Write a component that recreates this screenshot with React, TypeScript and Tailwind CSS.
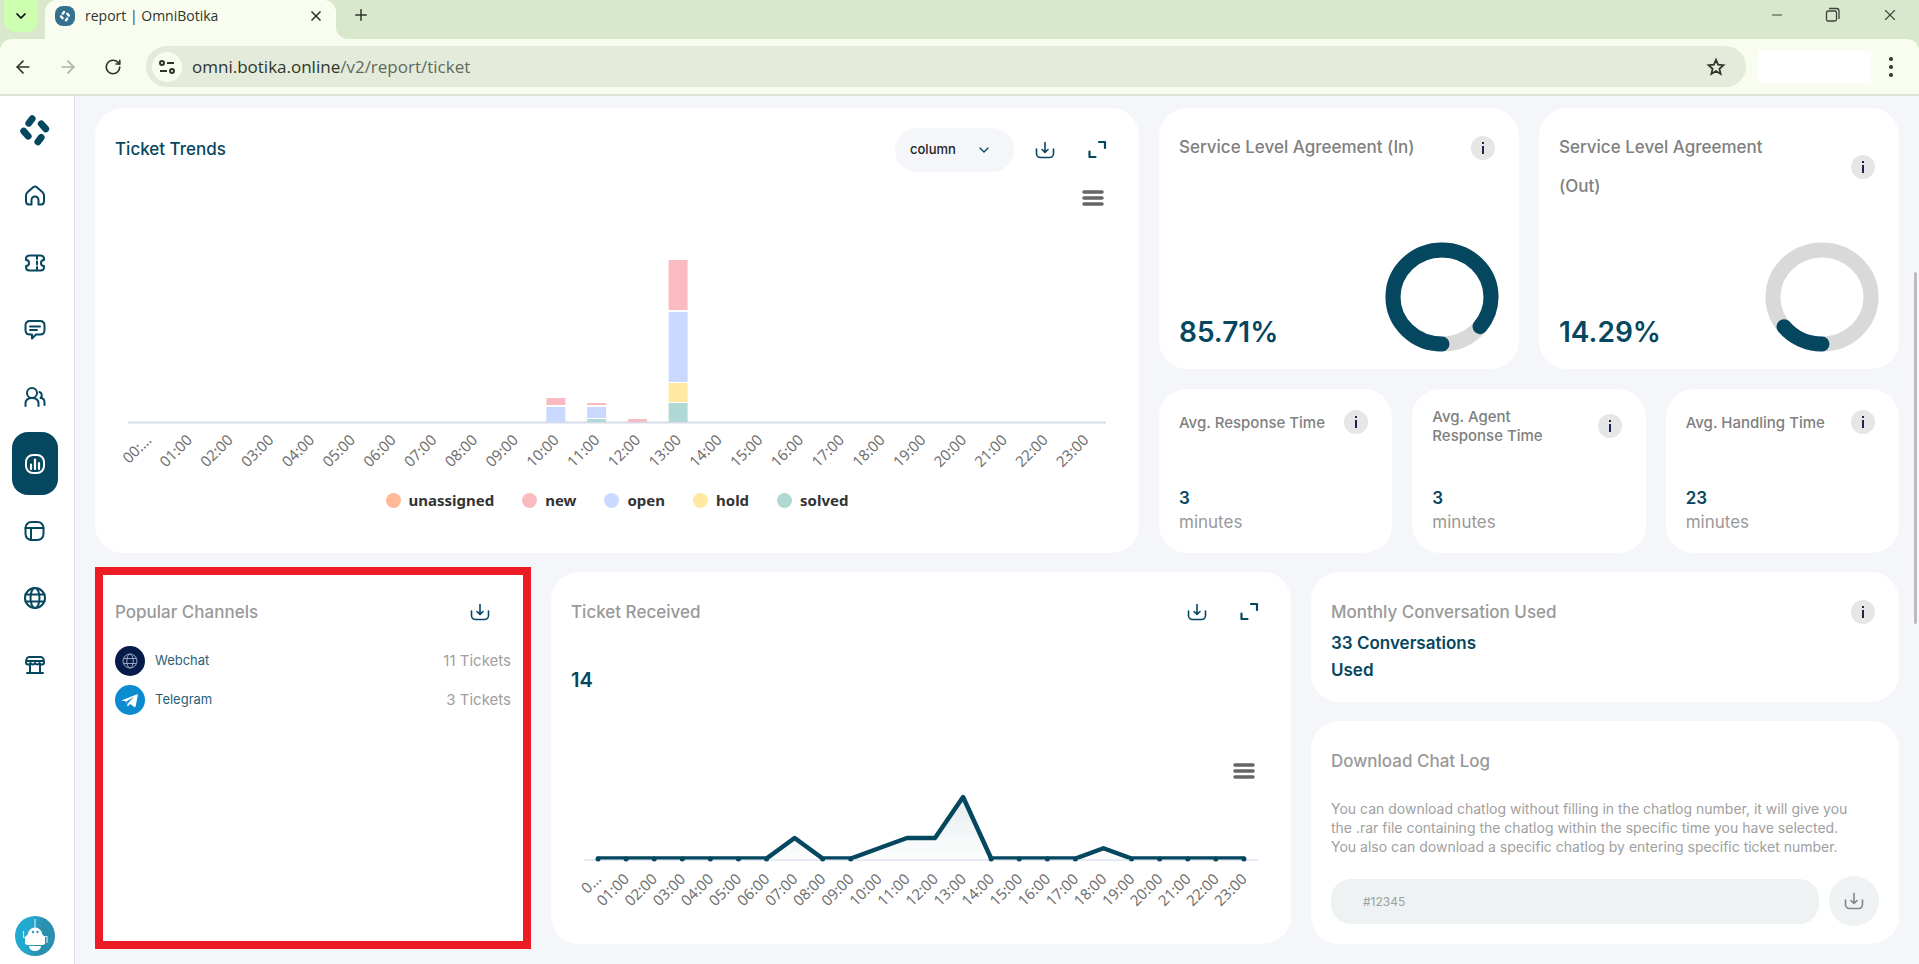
import type { ReactNode } from "react";
import { ArrowLeft, ArrowRight, ChevronDown, Minus, Plus, RotateCw, X } from "lucide-react";

const hours = Array.from({ length: 24 }, (_, i) => `${String(i).padStart(2, "0")}:00`);

const legend = [
    { label: "unassigned", dot: "bg-[#ffb996]" },
    { label: "new", dot: "bg-[#f9bbc0]" },
    { label: "open", dot: "bg-[#cad9ff]" },
    { label: "hold", dot: "bg-[#ffe8a0]" },
    { label: "solved", dot: "bg-[#b0d8d4]" },
];

// Stacked segments, top to bottom, in chart coordinates
const bars = [
    { hour: 10, y: 213, h: 7, color: "#f9bbc0" },
    { hour: 10, y: 222, h: 15, color: "#cad9ff" },
    { hour: 11, y: 218, h: 2, color: "#f9bbc0" },
    { hour: 11, y: 222, h: 11, color: "#cad9ff" },
    { hour: 11, y: 234, h: 3, color: "#b0d8d4" },
    { hour: 12, y: 234, h: 3, color: "#f4bcc4" },
    { hour: 13, y: 75, h: 50, color: "#f9bbc0" },
    { hour: 13, y: 127, h: 70, color: "#cad9ff" },
    { hour: 13, y: 198, h: 19, color: "#ffe8a0" },
    { hour: 13, y: 218, h: 19, color: "#b0d8d4" },
];

const received = [0, 0, 0, 0, 0, 0, 0, 2, 0, 0, 1, 2, 2, 6, 0, 0, 0, 0, 1, 0, 0, 0, 0, 0];

const averages = [
    { title: "Avg. Response Time", value: 3 },
    { title: "Avg. Agent Response Time", value: 3 },
    { title: "Avg. Handling Time", value: 23 },
];

function Card({ className = "", children }: { className?: string; children: ReactNode }) {
    return <section className={`rounded-[28px] bg-white px-5 ${className}`}>{children}</section>;
}

function InfoButton({ label }: { label: string }) {
    return (
        <button aria-label={label} className="flex size-6 shrink-0 items-center justify-center rounded-full bg-[#e6e6e6]">
            <svg viewBox="0 0 24 24" className="size-6" fill="#1c2450">
                <rect x="11" y="6" width="2" height="2" />
                <rect x="11" y="10" width="2" height="8" />
            </svg>
        </button>
    );
}

function DownloadIcon() {
    return (
        <svg viewBox="0 0 20 20" className="size-5" fill="none" stroke="currentColor" strokeWidth="1.6" strokeLinecap="round" strokeLinejoin="round">
            <path d="M10 2.500v9.500M7 9.500l3 3 3-3" />
            <path d="M1.500 9v4.500a4 4 0 0 0 4 4h9a4 4 0 0 0 4-4V9" />
        </svg>
    );
}

function ExpandIcon() {
    return (
        <svg viewBox="0 0 20 20" className="size-5" fill="none" stroke="currentColor" strokeWidth="2.200" strokeLinecap="round" strokeLinejoin="round">
            <path d="M12 2h6v6M2.500 11.500V17h6" />
        </svg>
    );
}

function ChartMenu({ x, y }: { x: number; y: number }) {
    return (
        <path
            d={`M${x} ${y}h18M${x} ${y + 6}h18M${x} ${y + 12}h18`}
            stroke="#666666"
            strokeWidth="3.500"
            strokeLinecap="round"
        />
    );
}

function HourLabels({ start, step, y, first }: { start: number; step: number; y: number; first: string }) {
    return (
        <g fill="#707070" fontSize="15" textAnchor="end" className="font-['Noto_Sans',sans-serif]">
            {hours.map((hour, i) => {
                const x = start + step * (i + 0.5) + 4;
                return (
                    <text key={hour} x={x} y={y} transform={`rotate(-45 ${x} ${y})`}>
                        {i === 0 ? first : hour}
                    </text>
                );
            })}
        </g>
    );
}

function TrendsChart() {
    return (
        <svg viewBox="0 0 1004 300" className="w-full" fill="none" role="img" aria-label="Ticket trends by hour">
            <path d="M13 237.500h978" stroke="#d5dbe8" strokeWidth="2" />
            {bars.map((bar, i) => (
                <rect key={i} x={13 + 40.75 * (bar.hour + 0.5) - 9.5} y={bar.y} width="19" height={bar.h} fill={bar.color} />
            ))}
            <ChartMenu x={969} y={7} />
            <HourLabels start={13} step={40.75} y={256} first="00:…" />
        </svg>
    );
}

function ReceivedChart() {
    const points = received.map((count, i) => ({ x: 13 + 28.08 * (i + 0.5), y: 103.5 - count * 10.25, count }));
    const line = points.map((p) => `${p.x},${p.y}`).join(" ");
    return (
        <svg viewBox="0 0 700 165" className="w-full" fill="none" role="img" aria-label="Tickets received by hour">
            <defs>
                <linearGradient id="area" x1="0" y1="0" x2="0" y2="1">
                    <stop offset="0" stopColor="#064760" stopOpacity="0.1" />
                    <stop offset="1" stopColor="#064760" stopOpacity="0.01" />
                </linearGradient>
                <clipPath id="plot">
                    <rect width="700" height="104.500" />
                </clipPath>
            </defs>
            <polygon points={`27,103.5 ${line} 673,103.5`} fill="url(#area)" />
            <path d="M13 105h674" stroke="#ccd6eb" />
            <polyline points={line} stroke="#064760" strokeWidth="4.500" strokeLinejoin="round" strokeLinecap="round" clipPath="url(#plot)" />
            {points.map((p) => p.count === 0 && <circle key={p.x} cx={p.x} cy={104} r="2.500" fill="#064760" />)}
            <ChartMenu x={664} y={10} />
            <HourLabels start={13} step={28.08} y={125} first="0…" />
        </svg>
    );
}

function Donut({ percent }: { percent: number }) {
    const ring = "M57 102A49 47 0 0 1 57 8A49 47 0 0 1 57 102";
    return (
        <svg viewBox="0 0 114 110" className="h-[110px] w-[114px] shrink-0" fill="none" strokeWidth="15">
            <path d={ring} stroke="#d9d9d9" />
            <path d={ring} stroke="#064760" strokeLinecap="round" pathLength="100" strokeDasharray={`${percent} 200`} />
        </svg>
    );
}

function SlaCard({ title, percent }: { title: string; percent: number }) {
    return (
        <Card className="flex flex-col justify-between pt-5 pb-[17px]">
            <div className="flex items-center justify-between gap-[52px] pr-1">
                <h2 className="text-[17px] leading-[39px] font-medium text-[#808080]">{title}</h2>
                <InfoButton label={`About ${title}`} />
            </div>
            <div className="flex items-end justify-between">
                <p className="pb-[2px] text-[28px] leading-9 font-semibold text-[#064760]">{percent}%</p>
                <Donut percent={percent} />
            </div>
        </Card>
    );
}

function LogoMark({ className }: { className: string }) {
    return (
        <svg viewBox="0 0 30 30" className={className} stroke="currentColor" strokeWidth="6" strokeLinecap="round">
            <path d="M9.500 9l3-4M20.500 9.500l4 4.500M5 16l4 4.500M17.500 25.500l3-4" />
        </svg>
    );
}

function NavIcon({ children }: { children: ReactNode }) {
    return (
        <svg viewBox="0 0 24 24" className="size-6" fill="none" stroke="currentColor" strokeWidth="2" strokeLinecap="round" strokeLinejoin="round">
            {children}
        </svg>
    );
}

const globe = (
    <>
        <circle cx="12" cy="12" r="10" />
        <ellipse cx="12" cy="12" rx="4.500" ry="10" />
        <path d="M2.500 8.500h19M2.500 15.500h19" />
    </>
);

const nav = [
    {
        label: "Home",
        icon: <path d="M3 11.500c0-1.500.6-2.500 1.700-3.500l5.200-4.600c1.300-1.100 2.900-1.100 4.200 0L19.300 8c1.100 1 1.700 2 1.700 3.500V17c0 2.500-1 3.500-3 3.500h-2.500V16a3.500 3.500 0 0 0-7 0v4.500H6c-2 0-3-1-3-3.500z" />,
    },
    {
        label: "Tickets",
        icon: (
            <>
                <path d="M3 8c0-2.500 1-3.500 3.500-3.500h11C20 4.500 21 5.500 21 8v1a3 3 0 0 0 0 6v1c0 2.500-1 3.500-3.500 3.500h-11C4 19.500 3 18.500 3 16v-1a3 3 0 0 0 0-6z" />
                <path d="M14 5v3M14 10.500v3M14 16v3" />
            </>
        ),
    },
    {
        label: "Chat",
        icon: (
            <>
                <path d="M7 3h10c2.700 0 4.500 1.800 4.500 4.500V12c0 2.700-1.800 4.500-4.500 4.500h-4L9 20.500v-4H7c-2.700 0-4.500-1.800-4.500-4.500V7.500C2.500 4.800 4.300 3 7 3z" />
                <path d="M7 8.500h10M7 12h7" />
            </>
        ),
    },
    {
        label: "Contacts",
        icon: (
            <>
                <circle cx="9" cy="8" r="5" />
                <path d="M2.500 21v-2.500c0-3.500 2.500-5.500 6.500-5.500s6.500 2 6.500 5.500V21M16.500 7a3.500 3.500 0 0 1 1 6c2.500 0 4 2 4 4.500V20" />
            </>
        ),
    },
    {
        label: "Reports",
        icon: (
            <>
                <rect x="3" y="3" width="18" height="18" rx="7" />
                <path d="M8 12.500v4.500M12 7.500V17M16 11v6" strokeWidth="2.200" />
            </>
        ),
        active: true,
    },
    {
        label: "Layouts",
        icon: (
            <>
                <rect x="2.500" y="3" width="18" height="18" rx="6" />
                <path d="M2.500 9h18M8 9v12" />
            </>
        ),
    },
    { label: "Languages", icon: globe },
    {
        label: "Store",
        icon: (
            <>
                <path d="M6 4h12c1.500 0 2 .6 2.500 2L21 9.500c0 2.700-3.500 2.700-4.500.5-.9 2-3.600 2-4.500 0-.9 2-3.600 2-4.500 0-1 2.200-4.500 2.200-4.500-.5L3.500 6C4 4.600 4.500 4 6 4z" />
                <path d="M3.500 8h17M7 12v8M17 12v8M4 20h16" />
            </>
        ),
    },
];

function Browser() {
    return (
        <header className="shrink-0 border-b-2 border-[#dfe5d8] bg-[#d9e7cd] font-['Open_Sans',sans-serif] text-[#2f352c]">
            <div className="flex h-[39px] items-end">
                <button aria-label="Search tabs" className="mx-1 flex h-8 w-[34px] items-center justify-center self-start rounded-b-xl bg-[#ccffb0] text-black">
                    <ChevronDown className="size-4" strokeWidth={2.5} />
                </button>
                <div className="ml-[3px] flex h-[39px] w-[291px] items-center rounded-t-xl bg-[#f8fdf0] pr-3 pb-2 pl-[10px]">
                    <span className="flex size-5 items-center justify-center rounded-lg bg-[#34718f] text-white">
                        <LogoMark className="size-3" />
                    </span>
                    <span className="ml-[10px] flex-1 text-sm">report | OmniBotika</span>
                    <button aria-label="Close tab"><X className="size-4" strokeWidth={2.5} /></button>
                </div>
                <span className="size-3 bg-[#f8fdf0]">
                    <span className="block size-3 rounded-bl-xl bg-[#d9e7cd]" />
                </span>
                <button aria-label="New tab" className="ml-1 self-start pt-[6px]">
                    <Plus className="size-[18px]" />
                </button>
                <div className="ml-auto flex gap-10 self-start pt-[6px] pr-5 text-[#3c4438]">
                    <button aria-label="Minimize"><Minus className="size-4" strokeWidth={1.5} /></button>
                    <button aria-label="Restore">
                        <svg viewBox="0 0 16 16" className="size-4" fill="none" stroke="currentColor" strokeWidth="1.300">
                            <rect x="1.500" y="4" width="10" height="10" rx="1.500" />
                            <path d="M4 1.500h7.500a2.500 2.500 0 0 1 2.500 2.500V12" />
                        </svg>
                    </button>
                    <button aria-label="Close"><X className="size-[18px]" strokeWidth={1.5} /></button>
                </div>
            </div>
            <div className="flex h-[55px] items-center rounded-t-xl bg-[#f8fdf0] pl-[13px]">
                <button aria-label="Back"><ArrowLeft className="size-5" /></button>
                <button aria-label="Forward" className="ml-[25px] text-[#aab2a4]"><ArrowRight className="size-5" /></button>
                <button aria-label="Reload" className="ml-[26px]"><RotateCw className="size-[18px]" strokeWidth={2.2} /></button>
                <div className="ml-6 flex h-[41px] flex-1 items-center rounded-full bg-[#e4ebdb] pl-[6px] pr-5">
                    <button aria-label="Site information" className="flex size-[30px] items-center justify-center rounded-full bg-[#f8fdf0]">
                        <svg viewBox="0 0 18 18" className="size-[18px]" fill="none" stroke="currentColor" strokeWidth="2">
                            <circle cx="4" cy="5" r="2" />
                            <path d="M9 5h7M2 13h7" />
                            <circle cx="14" cy="13" r="2" />
                        </svg>
                    </button>
                    <div role="textbox" aria-label="Address" tabIndex={0} className="ml-[10px] flex-1 text-[17px] leading-6">
                        omni.botika.online<span className="text-[#62695c]">/v2/report/ticket</span>
                    </div>
                    <button aria-label="Bookmark">
                        <svg viewBox="0 0 20 20" className="size-5" fill="none" stroke="currentColor" strokeWidth="1.800">
                            <path d="M10 2.800l2.100 4.900 5.300.5-4 3.500 1.200 5.200-4.600-2.800-4.600 2.800 1.200-5.200-4-3.500 5.300-.5z" />
                        </svg>
                    </button>
                </div>
                <span className="ml-3 h-8 w-[113px] bg-white" />
                <button aria-label="Menu" className="mr-[18px] ml-[10px]">
                    <svg viewBox="0 0 20 24" className="h-6 w-5" fill="currentColor">
                        <circle cx="10" cy="4" r="2" />
                        <circle cx="10" cy="12" r="2" />
                        <circle cx="10" cy="20" r="2" />
                    </svg>
                </button>
            </div>
        </header>
    );
}

function Sidebar() {
    return (
        <aside className="flex w-[75px] shrink-0 flex-col items-center border-r border-[#dfe2e8] bg-white pr-1 pb-2 text-[#064760]">
            <a href="#" aria-label="OmniBotika" className="flex h-[68px] items-center">
                <LogoMark className="size-[34px]" />
            </a>
            <nav className="flex flex-col gap-1">
                {nav.map((item) => (
                    <a
                        key={item.label}
                        href="#"
                        aria-label={item.label}
                        className={`flex h-[63px] w-[46px] items-center justify-center rounded-2xl ${item.active ? "bg-[#064760] text-white" : ""}`}
                    >
                        <NavIcon>{item.icon}</NavIcon>
                    </a>
                ))}
            </nav>
            <button aria-label="Account" className="mt-auto">
                <svg viewBox="0 0 40 40" className="size-10">
                    <defs>
                        <linearGradient id="bot" x1="0" y1="0" x2="1" y2="0.2">
                            <stop offset="0.4" stopColor="#22a9cf" />
                            <stop offset="0.7" stopColor="#2b90b0" />
                        </linearGradient>
                    </defs>
                    <circle cx="20" cy="20" r="20" fill="url(#bot)" />
                    <path d="M20 3v10M8.500 15v6.500h4M29 20.500h3V27" stroke="#c4e8f2" strokeWidth="1.200" fill="none" />
                    <path d="M13 18a7 6.500 0 0 1 14 0l3 3v7l-2 1H12l-2-1v-7z" fill="#ffffff" />
                    <path d="M14 30h12c0 3-3 5-6 5s-6-2-6-5z" fill="#ffffff" />
                    <circle cx="18" cy="16" r="1.200" fill="#2796ba" />
                    <circle cx="22.500" cy="16" r="1.200" fill="#2796ba" />
                </svg>
            </button>
        </aside>
    );
}

function ChannelRow({ name, tickets, icon }: { name: string; tickets: number; icon: ReactNode }) {
    return (
        <li className="flex items-center">
            {icon}
            <span className="ml-[10px] text-[13px] text-[#2b6075]">{name}</span>
            <span className="ml-auto text-[15px] text-[#a0a0a0]">{tickets} Tickets</span>
        </li>
    );
}

export default function App() {
    return (
        <div className="flex h-screen flex-col overflow-hidden bg-[#f5f6fa] font-['Inter',sans-serif]">
            <Browser />
            <div className="relative flex min-h-0 flex-1">
                <Sidebar />
                <main className="grid min-w-0 flex-1 grid-cols-12 content-start gap-x-5 gap-y-[19px] overflow-hidden px-5 pt-3">
                    <Card className="col-span-7 flex flex-col pt-5">
                        <div className="flex h-[44px] items-center text-[#064760]">
                            <h2 className="flex-1 text-[17px] font-medium">Ticket Trends</h2>
                            <div className="relative">
                                <select aria-label="Chart type" className="h-11 w-[119px] appearance-none rounded-full bg-[#f5f6fa] pl-[15px] text-[13px] font-medium text-[#222222]">
                                    <option>column</option>
                                </select>
                                <ChevronDown className="pointer-events-none absolute top-[14px] right-[22px] size-4" />
                            </div>
                            <button aria-label="Download trends" className="ml-[21px]"><DownloadIcon /></button>
                            <button aria-label="Expand trends" className="mr-3 ml-8"><ExpandIcon /></button>
                        </div>
                        <div className="mt-[13px]">
                            <TrendsChart />
                        </div>
                        <ul className="mt-1 flex justify-center gap-7 font-['Noto_Sans',sans-serif] text-[15px] font-bold text-[#333333]">
                            {legend.map((item) => (
                                <li key={item.label} className="flex items-center gap-2">
                                    <span className={`size-[15px] rounded-full ${item.dot}`} />
                                    {item.label}
                                </li>
                            ))}
                        </ul>
                    </Card>

                    <div className="col-span-5 flex flex-col gap-5">
                        <div className="grid min-h-[261px] grid-cols-2 gap-5">
                            <SlaCard title="Service Level Agreement (In)" percent={85.71} />
                            <SlaCard title="Service Level Agreement (Out)" percent={14.29} />
                        </div>
                        <div className="grid min-h-[164px] grid-cols-3 gap-5">
                            {averages.map((item) => (
                                <Card key={item.title} className="flex flex-col justify-between pt-[18px] pb-[19px]">
                                    <div className="flex min-h-[30px] items-center justify-between gap-4 pr-1">
                                        <h2 className="text-[15px] leading-[19px] font-medium text-[#808080]">{item.title}</h2>
                                        <InfoButton label={`About ${item.title}`} />
                                    </div>
                                    <div>
                                        <p className="text-[17px] leading-6 font-semibold text-[#064760]">{item.value}</p>
                                        <p className="text-[17px] leading-6 text-[#999999]">minutes</p>
                                    </div>
                                </Card>
                            ))}
                        </div>
                    </div>

                    <div className="relative col-span-3 min-h-[372px] bg-white px-5 pt-7">
                        <div className="flex items-center justify-between pr-[21px]">
                            <h2 className="text-[17px] leading-6 font-medium text-[#999999]">Popular Channels</h2>
                            <button aria-label="Download channels" className="text-[#064760]"><DownloadIcon /></button>
                        </div>
                        <ul className="mt-[22px] flex flex-col gap-[9px]">
                            <ChannelRow
                                name="Webchat"
                                tickets={11}
                                icon={
                                    <svg viewBox="0 0 30 30" className="size-[30px]" fill="none" stroke="#9aa5c4">
                                        <circle cx="15" cy="15" r="15" fill="#051c4a" stroke="none" />
                                        <circle cx="15" cy="15" r="7" />
                                        <ellipse cx="15" cy="15" rx="3.200" ry="7" />
                                        <path d="M8.500 12.500h13M8.500 17.500h13" />
                                    </svg>
                                }
                            />
                            <ChannelRow
                                name="Telegram"
                                tickets={3}
                                icon={
                                    <svg viewBox="0 0 30 30" className="size-[30px]">
                                        <circle cx="15" cy="15" r="15" fill="#0b8bd0" />
                                        <path d="M6.500 15.500L22 9.300c.6-.2 1 .1.900.8l-2.300 11.300c-.2.800-.7 1-1.400.6l-4-3-2 2c-.6.500-.9.200-1-.4l-.8-4z" fill="#ffffff" />
                                        <path d="M11.500 16.600l7.500-4.900-5.800 6.300-.3 2.600z" fill="#0b8bd0" />
                                    </svg>
                                }
                            />
                        </ul>
                        {/* Highlight frame around the channels card */}
                        <div className="pointer-events-none absolute inset-x-0 -inset-y-[5px] border-8 border-[#ed1c24]" />
                    </div>

                    <Card className="col-span-5 flex flex-col pt-7">
                        <div className="flex items-center text-[#064760]">
                            <h2 className="flex-1 text-[17px] leading-6 font-medium text-[#999999]">Ticket Received</h2>
                            <button aria-label="Download received"><DownloadIcon /></button>
                            <button aria-label="Expand received" className="mr-3 ml-8"><ExpandIcon /></button>
                        </div>
                        <p className="mt-11 text-xl leading-6 font-semibold text-[#064760]">14</p>
                        <div className="mt-auto pb-6">
                            <ReceivedChart />
                        </div>
                    </Card>

                    <div className="col-span-4 flex flex-col gap-[19px]">
                        <Card className="min-h-[130px] pt-7">
                            <div className="flex items-center justify-between pr-1">
                                <h2 className="text-[17px] leading-6 font-medium text-[#999999]">Monthly Conversation Used</h2>
                                <InfoButton label="About monthly conversations" />
                            </div>
                            <p className="mt-[6px] w-40 text-[17px] leading-[27px] font-semibold text-[#064760]">33 Conversations Used</p>
                        </Card>
                        <Card className="min-h-[223px] pt-7">
                            <h2 className="text-[17px] leading-6 font-medium text-[#999999]">Download Chat Log</h2>
                            <p className="mt-[26px] pr-6 text-sm leading-[19px] text-[#a0a0a0]">
                                You can download chatlog without filling in the chatlog number, it will give you the .rar file containing the chatlog within the specific time you have selected. You also can download a specific chatlog by entering specific ticket number.
                            </p>
                            <form className="mt-5 flex items-center gap-[10px]">
                                <input
                                    aria-label="Ticket number"
                                    placeholder="#12345"
                                    className="h-[45px] min-w-0 flex-1 rounded-[20px] bg-[#eef2f3] px-8 text-xs placeholder:text-[#a0a0a0]"
                                />
                                <button type="button" aria-label="Download chat log" className="flex size-[50px] shrink-0 items-center justify-center rounded-full bg-[#eef2f3] text-[#7f8688]">
                                    <DownloadIcon />
                                </button>
                            </form>
                        </Card>
                    </div>
                </main>
                <div className="absolute top-[176px] right-[2px] h-[352px] w-[3px] rounded-full bg-[#bcbcbe]" />
            </div>
        </div>
    );
}
